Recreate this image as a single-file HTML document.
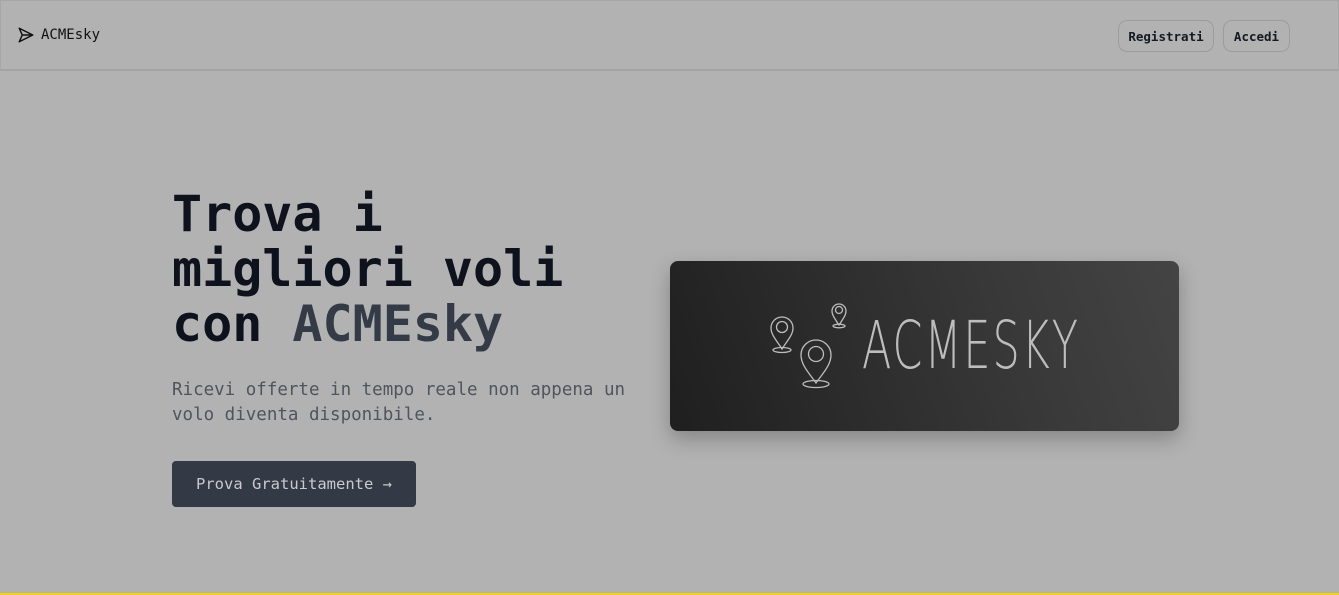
<!DOCTYPE html>
<html><head><meta charset="utf-8"><style>
*{margin:0;padding:0;box-sizing:border-box}
html,body{width:1339px;height:595px;overflow:hidden;background:#b2b2b2;font-family:"DejaVu Sans Mono","Liberation Mono",monospace}
.nav{position:absolute;left:0;top:0;width:1339px;height:71px;border:1px solid #a6a6a6;border-bottom:2px solid #a3a3a3;background:#b2b2b2}
.logo{position:absolute;left:16px;top:25px;display:flex;align-items:center;font-size:14px;color:#111}
.logo svg{margin-right:6px}
.btn{position:absolute;top:19px;height:32px;border:1px solid #9c9c9c;border-radius:9px;font-size:12.5px;font-weight:bold;color:#151a22;display:flex;align-items:center;justify-content:center}
h1{position:absolute;left:172px;top:187px;font-size:50px;line-height:55px;font-weight:bold;color:#0d121c;letter-spacing:0}
h1 span{color:#353b46}
p{position:absolute;left:172px;top:378px;font-size:17.5px;line-height:25px;color:#50545b;width:470px}
.cta{position:absolute;left:172px;top:461px;width:244px;height:46px;background:#333a45;border-radius:4px;color:#c9cacc;font-size:15.5px;display:flex;align-items:center;justify-content:center}
.card{position:absolute;left:670px;top:261px;width:509px;height:170px;border-radius:8px;background:linear-gradient(70deg,#1f1f1f,#3a3a3a 70%,#444);box-shadow:0 8px 20px rgba(0,0,0,.25)}
.card .t{position:absolute;left:192px;top:42px;font-family:"DejaVu Sans","Liberation Sans",sans-serif;font-weight:200;font-size:66px;letter-spacing:3px;color:#bdbdbd;transform:scaleX(0.65);transform-origin:left;line-height:86px}
.yl{position:absolute;left:0;top:593px;width:1339px;height:2px;background:#f3d20e}
</style></head><body>
<div class="nav">
<div class="logo"><svg width="18" height="18" viewBox="0 0 24 24" fill="none" stroke="#111" stroke-width="2" stroke-linejoin="round"><path d="M3 3 L21 12 L3 21 L7 12 Z M7 12 H21"/></svg>ACMEsky</div>
<div class="btn" style="left:1117px;width:96px">Registrati</div>
<div class="btn" style="left:1222px;width:67px">Accedi</div>
</div>
<h1>Trova i<br>migliori voli<br>con <span>ACMEsky</span></h1>
<p>Ricevi offerte in tempo reale non appena un volo diventa disponibile.</p>
<div class="cta">Prova Gratuitamente →</div>
<div class="card">
<svg width="509" height="170" style="position:absolute;left:0;top:0" fill="none" stroke="#bdbdbd" stroke-width="1.3">
<g transform="translate(112,58)"><path d="M0 30 C-5 22 -11 16 -11 9 A11 11 0 0 1 11 9 C11 16 5 22 0 30Z"/><circle cx="0" cy="8" r="5.5"/><ellipse cx="0" cy="31" rx="9" ry="2.5"/></g>
<g transform="translate(169,44)"><path d="M0 20 C-4 14 -7 10 -7 6 A7 7 0 0 1 7 6 C7 10 4 14 0 20Z"/><circle cx="0" cy="5" r="3.5"/><ellipse cx="0" cy="21" rx="6" ry="1.8"/></g>
<g transform="translate(146,82)"><path d="M0 40 C-7 30 -15 22 -15 12 A15 15 0 0 1 15 12 C15 22 7 30 0 40Z"/><circle cx="0" cy="11" r="7.5"/><ellipse cx="0" cy="41" rx="13" ry="3.5"/></g>
</svg>
<div class="t">ACMESKY</div>
</div>
<div class="yl"></div>
</body></html>
